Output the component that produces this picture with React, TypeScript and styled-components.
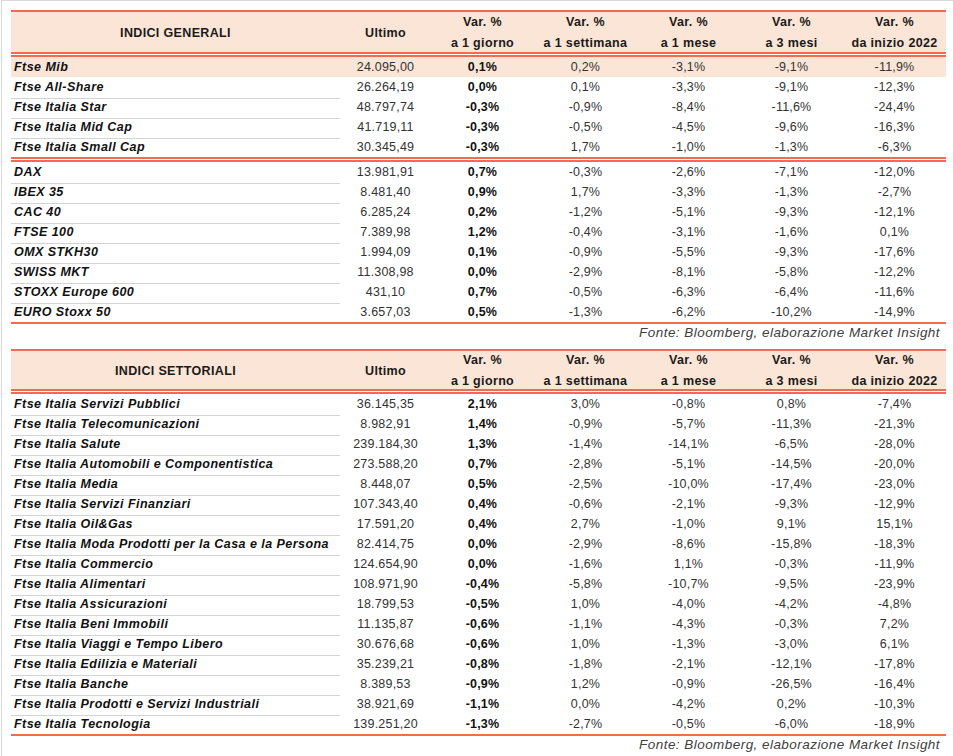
import styled, { createGlobalStyle } from "styled-components";

const RED = "#f26a4f";
const PEACH = "#fbe5d6";
const COLS = "329px 91px repeat(5, 103px)";

type Row = [string, string, string, string, string, string, string];

const generaliA: Row[] = [
  ["Ftse Mib", "24.095,00", "0,1%", "0,2%", "-3,1%", "-9,1%", "-11,9%"],
  ["Ftse All-Share", "26.264,19", "0,0%", "0,1%", "-3,3%", "-9,1%", "-12,3%"],
  ["Ftse Italia Star", "48.797,74", "-0,3%", "-0,9%", "-8,4%", "-11,6%", "-24,4%"],
  ["Ftse Italia Mid Cap", "41.719,11", "-0,3%", "-0,5%", "-4,5%", "-9,6%", "-16,3%"],
  ["Ftse Italia Small Cap", "30.345,49", "-0,3%", "1,7%", "-1,0%", "-1,3%", "-6,3%"],
];

const generaliB: Row[] = [
  ["DAX", "13.981,91", "0,7%", "-0,3%", "-2,6%", "-7,1%", "-12,0%"],
  ["IBEX 35", "8.481,40", "0,9%", "1,7%", "-3,3%", "-1,3%", "-2,7%"],
  ["CAC 40", "6.285,24", "0,2%", "-1,2%", "-5,1%", "-9,3%", "-12,1%"],
  ["FTSE 100", "7.389,98", "1,2%", "-0,4%", "-3,1%", "-1,6%", "0,1%"],
  ["OMX STKH30", "1.994,09", "0,1%", "-0,9%", "-5,5%", "-9,3%", "-17,6%"],
  ["SWISS MKT", "11.308,98", "0,0%", "-2,9%", "-8,1%", "-5,8%", "-12,2%"],
  ["STOXX Europe 600", "431,10", "0,7%", "-0,5%", "-6,3%", "-6,4%", "-11,6%"],
  ["EURO Stoxx 50", "3.657,03", "0,5%", "-1,3%", "-6,2%", "-10,2%", "-14,9%"],
];

const settoriali: Row[] = [
  ["Ftse Italia Servizi Pubblici", "36.145,35", "2,1%", "3,0%", "-0,8%", "0,8%", "-7,4%"],
  ["Ftse Italia Telecomunicazioni", "8.982,91", "1,4%", "-0,9%", "-5,7%", "-11,3%", "-21,3%"],
  ["Ftse Italia Salute", "239.184,30", "1,3%", "-1,4%", "-14,1%", "-6,5%", "-28,0%"],
  ["Ftse Italia Automobili e Componentistica", "273.588,20", "0,7%", "-2,8%", "-5,1%", "-14,5%", "-20,0%"],
  ["Ftse Italia Media", "8.448,07", "0,5%", "-2,5%", "-10,0%", "-17,4%", "-23,0%"],
  ["Ftse Italia Servizi Finanziari", "107.343,40", "0,4%", "-0,6%", "-2,1%", "-9,3%", "-12,9%"],
  ["Ftse Italia Oil&Gas", "17.591,20", "0,4%", "2,7%", "-1,0%", "9,1%", "15,1%"],
  ["Ftse Italia Moda Prodotti per la Casa e la Persona", "82.414,75", "0,0%", "-2,9%", "-8,6%", "-15,8%", "-18,3%"],
  ["Ftse Italia Commercio", "124.654,90", "0,0%", "-1,6%", "1,1%", "-0,3%", "-11,9%"],
  ["Ftse Italia Alimentari", "108.971,90", "-0,4%", "-5,8%", "-10,7%", "-9,5%", "-23,9%"],
  ["Ftse Italia Assicurazioni", "18.799,53", "-0,5%", "1,0%", "-4,0%", "-4,2%", "-4,8%"],
  ["Ftse Italia Beni Immobili", "11.135,87", "-0,6%", "-1,1%", "-4,3%", "-0,3%", "7,2%"],
  ["Ftse Italia Viaggi e Tempo Libero", "30.676,68", "-0,6%", "1,0%", "-1,3%", "-3,0%", "6,1%"],
  ["Ftse Italia Edilizia e Materiali", "35.239,21", "-0,8%", "-1,8%", "-2,1%", "-12,1%", "-17,8%"],
  ["Ftse Italia Banche", "8.389,53", "-0,9%", "1,2%", "-0,9%", "-26,5%", "-16,4%"],
  ["Ftse Italia Prodotti e Servizi Industriali", "38.921,69", "-1,1%", "0,0%", "-4,2%", "0,2%", "-10,3%"],
  ["Ftse Italia Tecnologia", "139.251,20", "-1,3%", "-2,7%", "-0,5%", "-6,0%", "-18,9%"],
];

const GlobalStyle = createGlobalStyle`
  body {
    margin: 0;
    background: #fff;
    font-family: "Liberation Sans", Arial, sans-serif;
    color: #262626;
  }
`;

const Page = styled.div`
  box-sizing: border-box;
  height: 756px;
  margin-left: 1px;
  border-top: 1px solid #d9d9d9;
  border-left: 1px solid #d9d9d9;
  padding: 9px 0 0 9px;
`;

const Table = styled.section`
  width: 935px;
  border-top: 2px solid ${RED};
`;

const HeadRow = styled.div<{ $h: number }>`
  display: grid;
  grid-template-columns: ${COLS};
  height: ${(p) => p.$h}px;
  background: ${PEACH};
  background-clip: padding-box;
  border-bottom: 5px double ${RED};
  font-weight: bold;
  font-size: 12.5px;
  color: #1a1a1a;
`;

const HeadCell = styled.div`
  display: flex;
  flex-direction: column;
  align-items: center;
  justify-content: center;
  gap: 6px;
  padding-top: 2px;
  text-align: center;
  line-height: 15px;
  letter-spacing: 0.35px;
`;

const Group = styled.div<{ $end: "double" | "single" }>`
  border-bottom: ${(p) =>
    p.$end === "double" ? `5px double ${RED}` : `2px solid ${RED}`};
`;

const DataRow = styled.div<{ $hl?: boolean }>`
  display: grid;
  grid-template-columns: ${COLS};
  height: 20px;
  background: ${(p) => (p.$hl ? PEACH : "transparent")};
  font-size: 12.5px;
  line-height: 21px;
`;

const Name = styled.div<{ $line: boolean }>`
  box-sizing: border-box;
  padding-left: 3px;
  font-weight: bold;
  font-style: italic;
  letter-spacing: 0.45px;
  color: #111;
  white-space: nowrap;
  border-bottom: 1px solid ${(p) => (p.$line ? "#d4d4d4" : "transparent")};
`;

const Value = styled.div<{ $bold?: boolean }>`
  text-align: center;
  letter-spacing: 0.2px;
  font-weight: ${(p) => (p.$bold ? "bold" : "normal")};
  color: ${(p) => (p.$bold ? "#111" : "#333")};
`;

const Source = styled.div<{ $h: number }>`
  width: 929px;
  height: ${(p) => p.$h}px;
  line-height: 18px;
  text-align: right;
  font-style: italic;
  font-size: 13.5px;
  letter-spacing: 0.45px;
  color: #404040;
`;

const Header = ({ title, h }: { title: string; h: number }) => (
  <HeadRow $h={h}>
    <HeadCell>{title}</HeadCell>
    <HeadCell>Ultimo</HeadCell>
    <HeadCell>
      <span>Var. %</span>
      <span>a 1 giorno</span>
    </HeadCell>
    <HeadCell>
      <span>Var. %</span>
      <span>a 1 settimana</span>
    </HeadCell>
    <HeadCell>
      <span>Var. %</span>
      <span>a 1 mese</span>
    </HeadCell>
    <HeadCell>
      <span>Var. %</span>
      <span>a 3 mesi</span>
    </HeadCell>
    <HeadCell>
      <span>Var. %</span>
      <span>da inizio 2022</span>
    </HeadCell>
  </HeadRow>
);

const Rows = ({ rows, end, hl }: { rows: Row[]; end: "double" | "single"; hl?: number }) => (
  <Group $end={end}>
    {rows.map((r, i) => (
      <DataRow key={r[0]} $hl={i === hl}>
        <Name $line={i !== rows.length - 1 && i !== hl}>{r[0]}</Name>
        <Value>{r[1]}</Value>
        <Value $bold>{r[2]}</Value>
        <Value>{r[3]}</Value>
        <Value>{r[4]}</Value>
        <Value>{r[5]}</Value>
        <Value>{r[6]}</Value>
      </DataRow>
    ))}
  </Group>
);

export default function App() {
  return (
    <>
      <GlobalStyle />
      <Page>
        <Table>
          <Header title="INDICI GENERALI" h={40} />
          <Rows rows={generaliA} end="double" hl={0} />
          <Rows rows={generaliB} end="single" />
        </Table>
        <Source $h={25}>Fonte: Bloomberg, elaborazione Market Insight</Source>
        <Table>
          <Header title="INDICI SETTORIALI" h={38} />
          <Rows rows={settoriali} end="single" />
        </Table>
        <Source $h={20}>Fonte: Bloomberg, elaborazione Market Insight</Source>
      </Page>
    </>
  );
}
